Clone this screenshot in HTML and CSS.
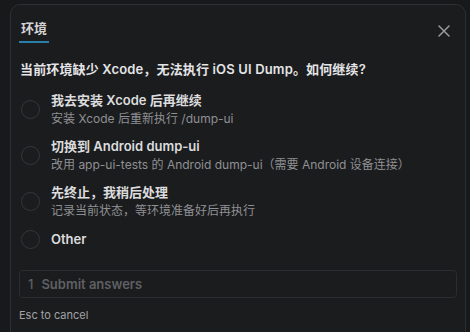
FILE: index.html
```html
<!DOCTYPE html>
<html lang="zh-CN">
<head>
<meta charset="utf-8">
<link rel="stylesheet" href="styles.css">
</head>
<body>
<div class="card">
  <div class="header">
    <div class="tab">环境</div>
    <button class="close" aria-label="关闭">
      <svg width="12" height="12" viewBox="0 0 12 12"><path d="M1 1 L11 11 M11 1 L1 11" stroke="#9b9b9d" stroke-width="1.5" stroke-linecap="round"/></svg>
    </button>
  </div>
  <div class="question">当前环境缺少 Xcode，无法执行 iOS UI Dump。如何继续?</div>
  <div class="options">
    <div class="option">
      <span class="radio"></span>
      <div class="text">
        <div class="title">我去安装 Xcode 后再继续</div>
        <div class="desc">安装 Xcode 后重新执行 /dump-ui</div>
      </div>
    </div>
    <div class="option">
      <span class="radio"></span>
      <div class="text">
        <div class="title">切换到 Android dump-ui</div>
        <div class="desc">改用 app-ui-tests 的 Android dump-ui（需要 Android 设备连接）</div>
      </div>
    </div>
    <div class="option">
      <span class="radio"></span>
      <div class="text">
        <div class="title">先终止，我稍后处理</div>
        <div class="desc">记录当前状态，等环境准备好后再执行</div>
      </div>
    </div>
    <div class="option single">
      <span class="radio"></span>
      <div class="text">
        <div class="title">Other</div>
      </div>
    </div>
  </div>
  <div class="submit"><span class="num">1</span><span>Submit answers</span></div>
  <div class="hint">Esc to cancel</div>
</div>
</body>
</html>
```
FILE: styles.css
```css
html, body { margin: 0; padding: 0; }
body {
  background: #18191b;
  font-family: Inter, "Noto Sans CJK SC", sans-serif;
  color: #e2e2e3;
  width: 470px;
  height: 332px;
  overflow: hidden;
}
.card {
  margin: 4px 4px 0 10px;
  height: 340px;
  box-sizing: border-box;
  background: #1b1c1e;
  border: 1px solid #2d2e31;
  border-radius: 10px;
  padding: 0 8px 0 8px;
}
.header {
  display: flex;
  justify-content: space-between;
  align-items: flex-start;
  padding-top: 14px;
  height: 37px;
  box-sizing: border-box;
}
.tab {
  font-size: 13px;
  font-weight: 600;
  color: #d4d4d6;
  padding: 0 2px;
  height: 23px;
  line-height: 16px;
  box-sizing: border-box;
  border-bottom: 2px solid #2a7eaa;
  margin-top: 1px;
}
.close {
  background: none;
  border: none;
  padding: 0;
  margin: 6px 7px 0 0;
  width: 12px;
  height: 12px;
  display: flex;
}
.question {
  margin-top: 18px;
  font-size: 13px;
  font-weight: 600;
  color: #e4e4e6;
  line-height: 18px;
  padding-left: 1px;
  letter-spacing: 0.15px;
}
.options {
  margin-top: 13px;
  display: flex;
  flex-direction: column;
  gap: 10px;
}
.option {
  display: flex;
  align-items: center;
  gap: 11px;
  padding-left: 2px;
  min-height: 36px;
}
.radio {
  width: 17px;
  height: 17px;
  border: 1px solid #35363a;
  border-radius: 50%;
  flex: none;
}
.text { display: flex; flex-direction: column; gap: 2px; }
.title {
  font-size: 13px;
  font-weight: 600;
  color: #dcdcde;
  line-height: 17px;
}
.desc {
  font-size: 12px;
  color: #8f9093;
  line-height: 16px;
}
.option.single { min-height: 20px; }
.submit {
  margin-top: 21px;
  height: 28px;
  border: 1px solid #2c2d30;
  border-radius: 4px;
  display: flex;
  align-items: center;
  gap: 8px;
  padding-left: 8px;
  font-size: 13px;
  font-weight: 600;
  color: #5f6063;
  box-sizing: border-box;
}
.submit .num { font-weight: 500; }
.hint {
  margin-top: 10px;
  font-size: 11px;
  color: #a2a3a6;
  line-height: 14px;
}
```
